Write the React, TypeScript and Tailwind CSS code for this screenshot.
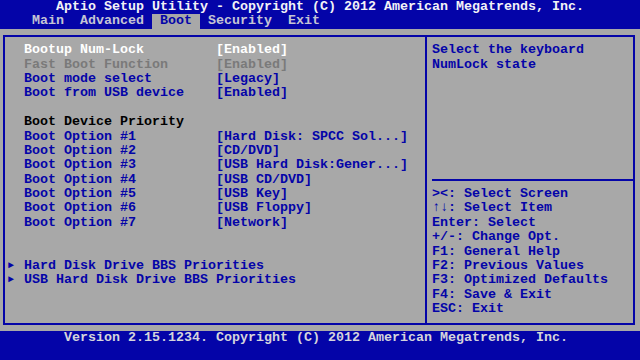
const BLUE = 'text-[#0404a8]';

type Opt = { label: string; value?: string; tone?: 'sel' | 'dim' | 'head' | 'norm' };

const LEFT_ROWS: (Opt | null)[] = [
  { label: 'Bootup Num-Lock', value: '[Enabled]', tone: 'sel' },
  { label: 'Fast Boot Function', value: '[Enabled]', tone: 'dim' },
  { label: 'Boot mode select', value: '[Legacy]' },
  { label: 'Boot from USB device', value: '[Enabled]' },
  null,
  { label: 'Boot Device Priority', tone: 'head' },
  { label: 'Boot Option #1', value: '[Hard Disk: SPCC Sol...]' },
  { label: 'Boot Option #2', value: '[CD/DVD]' },
  { label: 'Boot Option #3', value: '[USB Hard Disk:Gener...]' },
  { label: 'Boot Option #4', value: '[USB CD/DVD]' },
  { label: 'Boot Option #5', value: '[USB Key]' },
  { label: 'Boot Option #6', value: '[USB Floppy]' },
  { label: 'Boot Option #7', value: '[Network]' },
  null,
  null,
];

const SUBMENUS = ['Hard Disk Drive BBS Priorities', 'USB Hard Disk Drive BBS Priorities'];

const HELP = [
  '><: Select Screen',
  '↑↓: Select Item',
  'Enter: Select',
  '+/-: Change Opt.',
  'F1: General Help',
  'F2: Previous Values',
  'F3: Optimized Defaults',
  'F4: Save & Exit',
  'ESC: Exit',
];

function toneClass(tone?: Opt['tone']) {
  if (tone === 'sel') return 'text-white';
  if (tone === 'dim') return 'text-[#7a7a7a]';
  if (tone === 'head') return 'text-black';
  return BLUE;
}

function Row({ children, className = '' }: { children?: React.ReactNode; className?: string }) {
  return <div className={`h-[14.4px] flex ${className}`}>{children}</div>;
}

export default function App() {
  return (
    <div className="w-[640px] h-[360px] flex flex-col bg-[#a8a8a8] font-['Liberation_Mono','DejaVu_Sans_Mono',monospace] font-bold text-[13.333px] leading-[14.4px] whitespace-pre overflow-hidden">
      {/* title + tabs */}
      <header className="h-[28.8px] shrink-0 flex flex-col bg-[#0404a8]">
        <Row className="pl-[56px] text-[#f2f2f6]">
          Aptio Setup Utility - Copyright (C) 2012 American Megatrends, Inc.
        </Row>
        <Row className="pl-[32px] text-[#c4c4d4]">
          <span>Main  Advanced </span>
          <span className={`bg-[#a8a8a8] ${BLUE}`}> Boot </span>
          <span> Security  Exit</span>
        </Row>
      </header>

      {/* body */}
      <main className="flex-1 flex pt-[6px] pb-[6.5px] pl-[3px] pr-[5px]">
        <div className="flex-1 flex border-2 border-[#0404a8]">
          <section className="w-[420px] shrink-0 flex flex-col pt-[6.4px]">
            {LEFT_ROWS.map((r, i) =>
              r ? (
                <Row key={i} className={`pl-[19px] ${toneClass(r.tone)}`}>
                  <span className="w-[192px] shrink-0">{r.label}</span>
                  {r.value && <span>{r.value}</span>}
                </Row>
              ) : (
                <Row key={i} />
              ),
            )}
            {SUBMENUS.map((s) => (
              <Row key={s} className={`pl-[3px] ${BLUE}`}>
                <span className="w-[16px] shrink-0 text-[10px] flex items-center">►</span>
                <span>{s}</span>
              </Row>
            ))}
          </section>

          <aside className={`flex-1 flex flex-col border-l-2 border-[#0404a8] pl-[5px] pt-[6.4px] ${BLUE}`}>
            <Row>Select the keyboard</Row>
            <Row>NumLock state</Row>
            {Array.from({ length: 7 }).map((_, i) => (
              <Row key={i} />
            ))}
            <Row className="items-center">
              <div className="h-[2px] flex-1 bg-[#0404a8]" />
            </Row>
            {HELP.map((h) => (
              <Row key={h}>{h}</Row>
            ))}
          </aside>
        </div>
      </main>

      {/* footer */}
      <footer className="h-[28.8px] shrink-0 bg-[#0404a8] text-[#d4d4dc]">
        <Row className="pl-[64px]">Version 2.15.1234. Copyright (C) 2012 American Megatrends, Inc.</Row>
      </footer>
    </div>
  );
}
